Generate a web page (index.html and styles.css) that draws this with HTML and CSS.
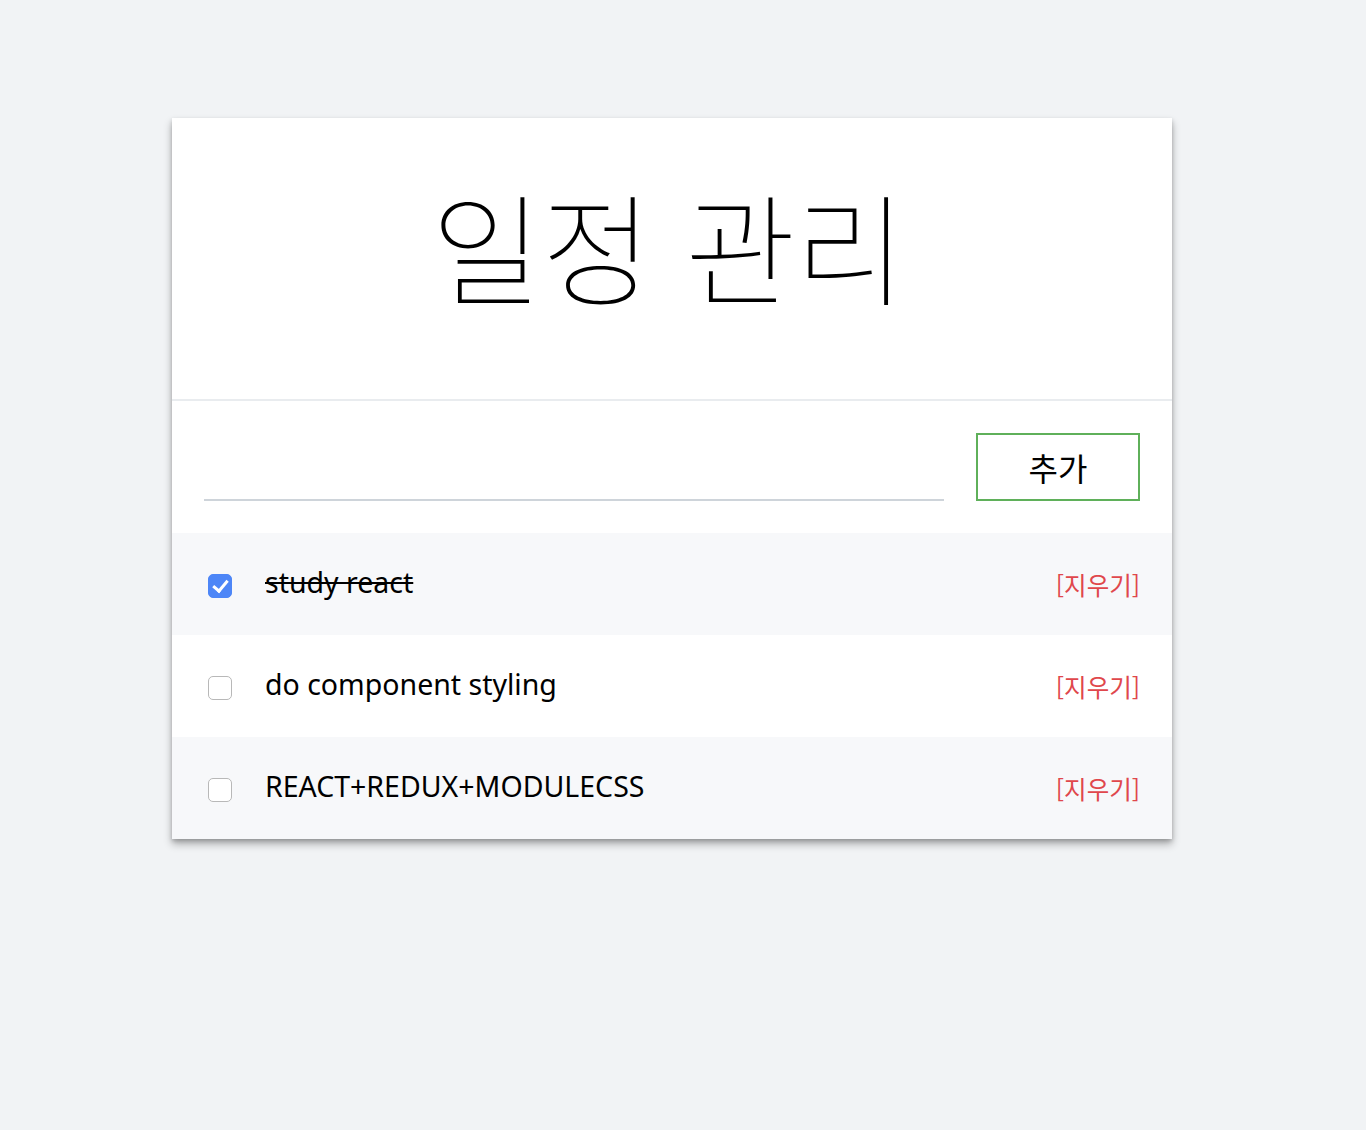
FILE: index.html
```html
<!DOCTYPE html>
<html lang="ko">
<head>
    <meta charset="UTF-8">
    <meta name="viewport" content="width=device-width, initial-scale=1.0">
    <title>일정 관리</title>
    <link rel="stylesheet" href="styles.css">
</head>
<body>
    <div class="todo-container">
        <div class="todo-header">
            <h1>일정 관리</h1>
        </div>
        <form class="todo-form">
            <input type="text" class="todo-input">
            <button type="submit" class="add-button">추가</button>
        </form>
        <ul class="todo-list">
            <li class="todo-item">
                <input type="checkbox" class="todo-check" checked>
                <span class="todo-text">study react</span>
                <span class="todo-remove">[지우기]</span>
            </li>
            <li class="todo-item">
                <input type="checkbox" class="todo-check">
                <span class="todo-text">do component styling</span>
                <span class="todo-remove">[지우기]</span>
            </li>
            <li class="todo-item">
                <input type="checkbox" class="todo-check">
                <span class="todo-text">REACT+REDUX+MODULECSS</span>
                <span class="todo-remove">[지우기]</span>
            </li>
        </ul>
    </div>
</body>
</html>
```

FILE: styles.css
```css
body {
    font-family: "Noto Sans", "Noto Sans CJK KR", sans-serif;
    background-color: #f1f3f5;
    margin: 0;
    padding: 118px 0 0 172px;
    min-height: 100vh;
    box-sizing: border-box;
    color: #000;
}
.todo-container {
    width: 1000px;
    background-color: #fff;
    box-shadow:
        0 2px 4px rgba(0, 0, 0, 0.16),
        0 5px 8px rgba(0, 0, 0, 0.3);
}
.todo-header {
    height: 281px;
    display: flex;
    align-items: center;
    justify-content: center;
    border-bottom: 2px solid #e9ecef;
}
.todo-header h1 {
    margin: 0 8px 30px 0;
    font-family: "Noto Sans CJK KR", sans-serif;
    font-weight: 100;
    font-size: 121px;
    line-height: 1;
    letter-spacing: -1px;
}
.todo-form {
    display: flex;
    align-items: flex-end;
    gap: 32px;
    padding: 32px;
}
.todo-input {
    flex: 1;
    border: none;
    border-bottom: 2px solid #ced4da;
    height: 66px;
    padding: 0;
    outline: none;
    font-size: 24px;
    background: transparent;
}
.add-button {
    width: 164px;
    height: 68px;
    border: 2px solid #5fb05a;
    background-color: #fff;
    font-family: "Noto Sans CJK KR", sans-serif;
    font-size: 32px;
    color: #000;
    cursor: pointer;
}
.todo-list {
    list-style: none;
    margin: 0;
    padding: 0;
}
.todo-item {
    height: 102px;
    display: flex;
    align-items: center;
    padding: 0 32px 0 36px;
}
.todo-item:nth-child(odd) {
    background-color: #f7f8fa;
}
.todo-check {
    appearance: none;
    -webkit-appearance: none;
    width: 24px;
    height: 24px;
    margin: 4px 33px 0 0;
    border: 1px solid #b8b8b8;
    border-radius: 5px;
    background-color: #fff;
    position: relative;
}
.todo-check:checked {
    background-color: #4d86f7;
    border-color: #4d86f7;
}
.todo-check:checked::after {
    content: "";
    position: absolute;
    left: 7px;
    top: 2px;
    width: 6px;
    height: 12px;
    border: solid #fff;
    border-width: 0 3px 3px 0;
    transform: rotate(40deg);
}
.todo-text {
    flex: 1;
    font-size: 28.5px;
    margin-top: -4px;
}
.todo-check:checked + .todo-text {
    text-decoration: line-through;
}
.todo-remove {
    font-family: "Noto Sans CJK KR", sans-serif;
    font-size: 24.5px;
    color: #e0474c;
    cursor: pointer;
}
```
